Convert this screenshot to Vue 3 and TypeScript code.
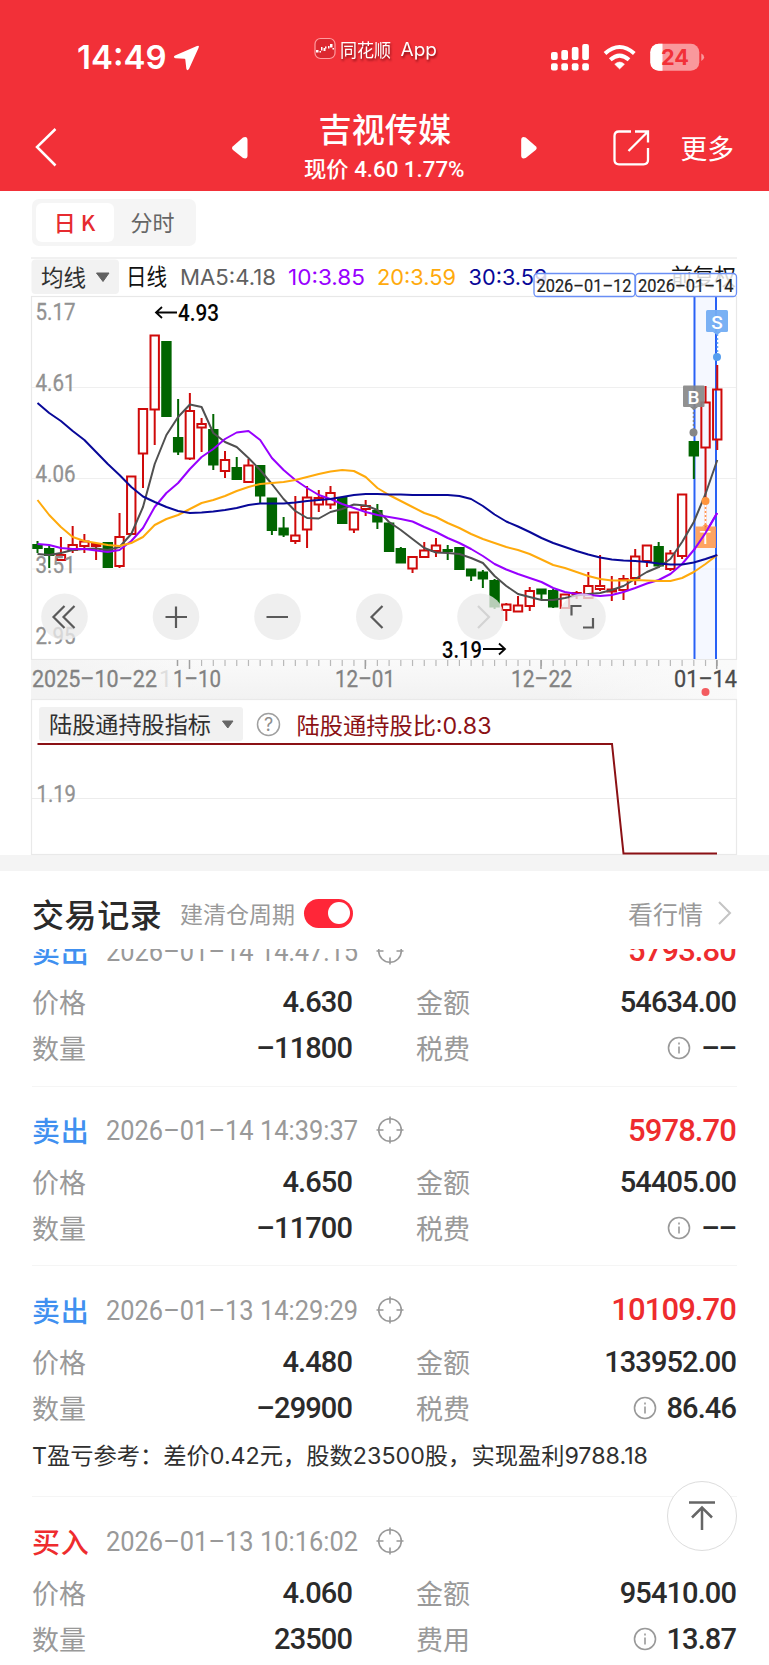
<script setup lang="ts">
type Candle = [top: number, bottom: number, high: number, low: number, rising: boolean]
interface Trade {
  side: string
  buy?: boolean
  time: string
  profit: string
  price: string
  amount: string
  qty: string
  feeLabel: string
  fee: string
  note?: string
}

// Candle bodies and wicks in chart units: top, bottom, high, low
const candles: Candle[] = [
  [545, 548, 541, 553, false],
  [549, 555, 546, 568, false],
  [555, 560, 537, 561, true],
  [545, 550, 526, 553, true],
  [541.5, 546, 534, 553, true],
  [544, 546, 543, 560, true],
  [543, 567, 543, 567, false],
  [537, 566, 513, 568, true],
  [476.5, 534, 476.5, 534, true],
  [409, 453.5, 409, 488, true],
  [335.5, 409.5, 335.5, 445, true],
  [342, 416, 342, 416, false],
  [438, 451.5, 399, 455, false],
  [411, 458.5, 393, 460, true],
  [424, 427.5, 418, 452, true],
  [430, 464.5, 414, 470, false],
  [460, 471, 451, 478, true],
  [468, 479, 457, 479, false],
  [465.5, 482, 459, 483, true],
  [466, 495.5, 466, 503, false],
  [498.5, 530, 498, 535, false],
  [528.5, 534.5, 517, 537, false],
  [535.5, 541, 496, 544, true],
  [497.5, 529.5, 486, 548, true],
  [498, 504.5, 490, 512, true],
  [493, 504.5, 486, 509, true],
  [498, 523, 497, 524, false],
  [512.5, 529.5, 512, 533, true],
  [506, 509, 500, 516, true],
  [511, 521.5, 504, 529, false],
  [523.5, 551, 523, 552, false],
  [549, 562.5, 547, 563, false],
  [557, 568.5, 556, 573, true],
  [550.5, 557, 542, 558, true],
  [545.5, 551, 538, 557, true],
  [550, 551, 545, 560, false],
  [548, 569, 548, 570, false],
  [569.5, 575.5, 569, 581, false],
  [572.5, 578.5, 570, 588, false],
  [581, 606.500, 579, 609, false],
  [604.5, 610, 603, 621, true],
  [605.5, 611.5, 596, 612, true],
  [591, 606, 587, 611, true],
  [589.5, 593.5, 589, 600, false],
  [591, 606.5, 589, 608, false],
  [594.5, 608, 594, 609, true],
  [593, 594, 591, 599, true],
  [586, 598, 572, 599, true],
  [586, 589, 555, 591, true],
  [589.5, 591.5, 576, 601, true],
  [579, 590, 575, 600, true],
  [556.5, 578, 549, 585, true],
  [545.5, 561, 545, 567, true],
  [547, 565.5, 542, 568, false],
  [553.5, 569, 550, 571, true],
  [494.5, 556, 494, 559, true],
  [442, 455.5, 441, 479, false],
  [402.5, 447.5, 386, 540, true],
  [389.5, 439.5, 365, 450, true],
]
const step = 11.72
const cx = (i: number) => 37.5 + i * step

const curve = (values: number[]) =>
  values.map((y, i) => `${cx(i).toFixed(1)},${y}`).join(' ')

const ma5 = curve([554, 555, 553, 550, 549, 548.5, 550, 547, 534, 507, 464, 435, 417, 404.5, 407, 433, 442, 447, 458, 470, 484, 499, 511, 518, 518.5, 512, 509, 504.5, 505.5, 510, 522, 530, 539, 548, 552.5, 553, 554, 558, 563, 576, 586, 594, 597, 600, 600, 598, 595.5, 594, 593, 590, 586, 579, 572, 567, 559, 542, 522, 494, 460])
const ma10 = curve([544, 545, 548, 549, 549, 550.5, 552, 550, 541, 528, 507, 493, 483, 469, 457, 449, 439, 432.5, 431, 440, 458, 470, 480, 488, 495, 499, 504, 508, 512, 515, 517, 519, 521.5, 527, 532, 538, 543, 549, 556, 564, 569.5, 574, 578, 582, 588, 592, 594, 595, 596, 595, 592, 588, 583.5, 580, 574, 564, 550, 533, 513])
const ma20 = curve([500, 515, 527, 537, 541, 543, 545, 546, 543, 537, 525, 519, 515, 509, 503, 500, 496, 491, 487, 484, 483, 482, 480, 477, 474, 471.5, 470, 471, 477, 488, 495, 501, 507, 513, 517, 523, 528, 534, 539, 543, 547, 550, 554, 559.5, 565, 568, 572, 576, 579, 580.5, 580.5, 580, 580.5, 581, 581, 578, 572, 564, 555])
const ma30 = curve([403, 413, 421, 431, 440, 452, 464, 475, 487, 496.5, 502, 507, 511, 513, 512.5, 511.5, 510, 508, 505, 503.5, 503.5, 503.5, 502.5, 501, 500, 499, 497, 495, 494, 494, 494.5, 494.5, 495, 495, 495, 495, 496, 499, 506, 514.5, 521.5, 526.5, 532, 538, 543, 547, 551, 554.5, 557.5, 559.5, 560.5, 561, 562, 563.5, 564.5, 564.5, 562.5, 559, 555])

const axis = [
  { label: '5.17', y: 319.5 },
  { label: '4.61', y: 391 },
  { label: '4.06', y: 482 },
  { label: '3.51', y: 572.5 },
  { label: '2.95', y: 643.5 },
]

const trades: Trade[] = [
  { side: '卖出', time: '2026-01-14 14:47:15', profit: '5793.80', price: '4.630', amount: '54634.00', qty: '-11800', feeLabel: '税费', fee: '--' },
  { side: '卖出', time: '2026-01-14 14:39:37', profit: '5978.70', price: '4.650', amount: '54405.00', qty: '-11700', feeLabel: '税费', fee: '--' },
  { side: '卖出', time: '2026-01-13 14:29:29', profit: '10109.70', price: '4.480', amount: '133952.00', qty: '-29900', feeLabel: '税费', fee: '86.46', note: 'T盈亏参考：差价0.42元，股数23500股，实现盈利9788.18' },
  { side: '买入', buy: true, time: '2026-01-13 10:16:02', profit: '', price: '4.060', amount: '95410.00', qty: '23500', feeLabel: '费用', fee: '13.87' },
]
const dash = (s: string) => s.replace(/-/g, '–')
</script>

<template>
  <main class="screen">
    <header class="header">
      <svg class="header-art" width="769" height="191" viewBox="0 0 769 191">
        <text x="77" y="69.3" class="clock" textLength="89.500" lengthAdjust="spacingAndGlyphs">14:49</text>
        <path d="M175 55.5 197 46Q200 45 198.500 48L189 69Q187 71.500 186.300 68.500L185.300 59.500Q185.200 58.800 184.500 58.700L175.500 58.200Q172.500 57.300 175 55.500Z" fill="#fff" />
        <rect x="315" y="38.500" width="20" height="20" rx="5.500" fill="#dc2830" stroke="#ff9c9f" stroke-width="1.200" />
        <g fill="#fff"><rect x="316" y="50" width="2.500" height="2.500" /><rect x="319.500" y="51" width="1.500" height="1.500" /><rect x="321" y="47" width="1.500" height="3.500" /><rect x="323.500" y="48" width="2" height="3" /><rect x="325" y="46.500" width="1.500" height="2" /><rect x="328" y="46" width="1.500" height="2.500" /><rect x="330" y="44" width="2.500" height="3.500" /><rect x="332.500" y="48" width="1.500" height="1.500" /></g>
        <text x="340" y="56.500" class="appname" textLength="51" lengthAdjust="spacingAndGlyphs">同花顺</text>
        <text x="400.500" y="56" class="appname" textLength="36.500" lengthAdjust="spacingAndGlyphs">App</text>
        <g fill="#fff">
          <rect x="551" y="52" width="6.700" height="8" rx="2" /><rect x="561.300" y="50" width="6.700" height="10" rx="2" />
          <rect x="571.800" y="47" width="6.700" height="13" rx="2" /><rect x="582.200" y="44" width="6.700" height="16" rx="2" />
          <rect v-for="x in [551, 561.3, 571.8, 582.2]" :key="x" :x="x" y="63.300" width="6.700" height="7.200" rx="2" />
          <path d="M619.600 69 614.700 64.200Q619.600 59.800 624.500 64.200Z" stroke="#fff" stroke-width=".5" />
        </g>
        <g fill="none" stroke="#fff" stroke-width="4"><path d="M605 53.500Q619.600 40.500 634.300 53.500" /><path d="M610.300 59.800Q619.600 51.500 629 59.800" /></g>
        <rect x="650.300" y="43.800" width="49" height="27" rx="8.500" fill="#f9989c" />
        <path d="M662.500 43.800h-3.700a8.500 8.500 0 0 0-8.500 8.500v10a8.500 8.500 0 0 0 8.500 8.500h3.700z" fill="#fff" />
        <path d="M701.300 53.500q2.800 1.300 2.800 3.800t-2.800 3.800z" fill="#f9989c" />
        <text x="661" y="65" class="battery" textLength="28" lengthAdjust="spacingAndGlyphs">24</text>
        <path d="M55.500 129 37 147 55.500 165.500" fill="none" stroke="#fff" stroke-width="2.500" />
        <path d="M233 146.200 243 137.500Q247.500 136 247.500 140V155.500Q247.500 159.500 243 158L233 150Q231 148 233 146.200Z" fill="#fff" />
        <path d="M535.700 146.200 525.700 137.500Q521.200 136 521.200 140V155.500Q521.200 159.500 525.700 158L535.700 150Q537.700 148 535.700 146.200Z" fill="#fff" />
        <text x="318.500" y="142" class="title" textLength="132.500" lengthAdjust="spacingAndGlyphs">吉视传媒</text>
        <text x="304" y="177" class="quote" textLength="160.500" lengthAdjust="spacingAndGlyphs">现价 4.60 1.77%</text>
        <g fill="none" stroke="#fff" stroke-width="2.300"><path d="M631 131.500H619Q614.500 131.500 614.500 136V160Q614.500 164.300 619 164.300H643.500Q648 164.300 648 160V148" /><path d="M635 131.500H648V142.500M648 131.500 628.500 151" /></g>
        <text x="680.500" y="158.500" class="more" textLength="53.500" lengthAdjust="spacingAndGlyphs">更多</text>
      </svg>
    </header>

    <nav class="tabs">
      <span class="tab active">日 K</span>
      <span class="tab">分时</span>
    </nav>

    <svg class="chart" width="769" height="613" viewBox="0 245 769 613">
      <defs>
        <linearGradient id="axisFade" x1="0" x2="0" y1="0" y2="1"><stop offset="0" stop-color="#fafafa" /><stop offset="1" stop-color="#f2f2f2" /></linearGradient>
        <linearGradient id="axisSide" x1="0" x2="1"><stop offset="0" stop-color="#f3f3f3" /><stop offset=".25" stop-color="#f3f3f3" stop-opacity="0" /><stop offset=".75" stop-color="#fafafa" stop-opacity="0" /><stop offset="1" stop-color="#fafafa" /></linearGradient>
      </defs>
      <path d="M31 258H737" stroke="#f1f1f1" stroke-width="2" />
      <rect x="31.500" y="259.500" width="87.500" height="34.500" rx="4" fill="#f2f2f2" />
      <text x="41" y="285.500" class="cn" textLength="45" lengthAdjust="spacingAndGlyphs">均线</text>
      <path d="M96.500 273H109L103 281.500Z" fill="#606060" stroke="#606060" stroke-linejoin="round" />
      <text x="126" y="284.500" class="cn dark" textLength="41" lengthAdjust="spacingAndGlyphs">日线</text>
      <g class="ma">
        <text x="180" y="284.500" fill="#606060" textLength="96" lengthAdjust="spacingAndGlyphs">MA5:4.18</text>
        <text x="288" y="284.500" fill="#9800ff" textLength="77" lengthAdjust="spacingAndGlyphs">10:3.85</text>
        <text x="377" y="284.500" fill="#ffaa0c" textLength="79" lengthAdjust="spacingAndGlyphs">20:3.59</text>
        <text x="468.500" y="284.500" fill="#080898" textLength="79" lengthAdjust="spacingAndGlyphs">30:3.59</text>
      </g>
      <text x="671" y="285" class="cn dark" textLength="65" lengthAdjust="spacingAndGlyphs">前复权</text>

      <rect x="31.500" y="296.500" width="705" height="363" fill="none" stroke="#e8e8e8" stroke-width="1.200" />
      <path d="M32 387.500H736M32 478.500H736M32 569H736" stroke="#efefef" stroke-width="1.200" />
      <rect x="696" y="297" width="20" height="362" fill="#f5f8ff" />
      <path d="M696 387.500H716M696 478.500H716M696 569H716" stroke="#e9edf4" stroke-width="1.200" />
      <path d="M694.500 297V659M716 297V659" stroke="#2861f6" stroke-width="2" />

      <g v-for="([top, bottom, high, low, rising], i) in candles" :key="i" :stroke="rising ? '#cf0a0a' : '#006500'" :fill="rising ? 'none' : '#006500'" stroke-width="2">
        <path :d="`M${cx(i)} ${high}V${top}M${cx(i)} ${bottom}V${low}`" />
        <rect :x="cx(i) - 4.2" :y="top" width="8.400" :height="bottom - top" />
      </g>
      <g fill="none" stroke-width="2" stroke-linejoin="round">
        <polyline :points="ma5" stroke="#505050" /><polyline :points="ma10" stroke="#9800ff" />
        <polyline :points="ma20" stroke="#ffaa0c" /><polyline :points="ma30" stroke="#080898" />
      </g>

      <g class="axis">
        <text v-for="a in axis" :key="a.label" x="35.500" :y="a.y" textLength="40" lengthAdjust="spacingAndGlyphs">{{ a.label }}</text>
      </g>
      <g fill="none" stroke="#050505" stroke-width="1.800">
        <path d="M177 312.500H156M162 307 156 312.500 162 318" /><path d="M483 649H505M499 643.500 505 649 499 654.500" />
      </g>
      <text x="178" y="321" class="extreme" textLength="41" lengthAdjust="spacingAndGlyphs">4.93</text>
      <text x="442" y="657.500" class="extreme" textLength="40" lengthAdjust="spacingAndGlyphs">3.19</text>

      <g fill="#eaeaea" fill-opacity=".78">
        <circle v-for="x in [64.5, 176, 277.5, 379.3, 480.5, 582.5]" :key="x" :cx="x" cy="616.700" r="23.300" />
      </g>
      <g fill="none" stroke="#5a5a5a" stroke-width="2.200">
        <path d="M64.500 606 53.500 617 64.500 628M74.500 606 63.500 617 74.500 628" />
        <path d="M165.500 617H187M176 606.500V628M266.500 617H288M382.500 606 371.500 617 382.500 628" />
        <path d="M571.500 615.500V606H581.500M593 618V627.500H583" />
        <path d="M478 606 489 617 478 628" stroke="#d3d3d3" />
      </g>

      <rect x="31" y="660" width="706" height="39" fill="url(#axisFade)" /><rect x="31" y="660" width="706" height="39" fill="url(#axisSide)" />
      <path v-for="i in 45" :key="i" :d="`M${cx(i + 13)} 660v6`" stroke="#b9b9b9" stroke-width="1.200" />
      <path d="M177.500 660V666M189.500 660V669M365.300 660V669M541 660V669M716.700 660V669" stroke="#a0a0a0" stroke-width="1.500" />
      <g class="date">
        <text x="32" y="686.500" textLength="125" lengthAdjust="spacingAndGlyphs">2025–10–22</text>
        <text x="159" y="686.500" class="faded">1</text><text x="173" y="686.500" textLength="48" lengthAdjust="spacingAndGlyphs">1–10</text>
        <text x="335" y="686.500" textLength="60" lengthAdjust="spacingAndGlyphs">12–01</text>
        <text x="511" y="686.500" textLength="61" lengthAdjust="spacingAndGlyphs">12–22</text>
        <text x="674" y="686.500" class="today" textLength="63" lengthAdjust="spacingAndGlyphs">01–14</text>
      </g>
      <circle cx="705.500" cy="692" r="4" fill="#f35c60" />

      <g>
        <path d="M693.500 408V431" stroke="#858585" stroke-width="1.500" stroke-dasharray="2 2" />
        <path d="M717.500 334V354" stroke="#64aaf4" stroke-width="1.500" stroke-dasharray="2 2" />
        <path d="M705.500 503V526" stroke="#fff" stroke-width="2.500" /><path d="M705.500 503V526" stroke="#ff994d" stroke-width="1.500" stroke-dasharray="2 2" />
        <circle cx="693.500" cy="432.500" r="4" fill="#858585" /><circle cx="717" cy="357" r="4" fill="#559eee" /><circle cx="705.500" cy="501" r="4" fill="#ff953d" />
        <rect x="683" y="385.500" width="21.500" height="21.500" rx="1" fill="#858585" fill-opacity=".9" /><path d="M690 407l4 3 4-3z" fill="#858585" />
        <rect x="706" y="310" width="22" height="22" rx="1.500" fill="#73adf3" fill-opacity=".95" /><path d="M713 332l4 3 4-3z" fill="#73adf3" />
        <rect x="695.500" y="526.500" width="20.500" height="21.500" fill="#ff9a50" fill-opacity=".9" /><path d="M702 526.500l3.500-3 3.500 3z" fill="#ff994d" />
        <g class="badge"><text x="693.500" y="403.500">B</text><text x="717" y="328.500">S</text><text x="705.500" y="544" class="light">T</text></g>
        <path d="M694 550 705.500 533 717 513" fill="none" stroke="#9800ff" stroke-width="2" />
      </g>
      <g fill="#fff" fill-opacity=".82" stroke="#698ef5" stroke-width="1.300"><rect x="534" y="273.500" width="101" height="23" rx="3.500" /><rect x="635.500" y="273.500" width="101" height="23" rx="3.500" /></g>
      <g class="range"><text x="536.500" y="291.500" textLength="95" lengthAdjust="spacingAndGlyphs">2026–01–12</text><text x="638" y="291.500" textLength="95.500" lengthAdjust="spacingAndGlyphs">2026–01–14</text></g>

      <rect x="31.500" y="699.500" width="705" height="155" fill="#fff" stroke="#e9e9e9" stroke-width="1.200" />
      <path d="M32 798.500H736" stroke="#ececec" />
      <rect x="39" y="707" width="204" height="34" rx="3" fill="#f1f1f1" />
      <text x="49" y="733" class="cn" textLength="162" lengthAdjust="spacingAndGlyphs">陆股通持股指标</text>
      <path d="M222.500 721H233L227.800 728Z" fill="#666" stroke="#666" stroke-linejoin="round" />
      <circle cx="268.500" cy="724.500" r="11" fill="none" stroke="#a0a0a0" stroke-width="1.500" /><text x="268.500" y="731" class="help">?</text>
      <text x="296.500" y="733.500" class="cn holding" textLength="195" lengthAdjust="spacingAndGlyphs">陆股通持股比:0.83</text>
      <path d="M37.500 744H612L623.500 853.500H717" fill="none" stroke="#8b1115" stroke-width="2" />
      <text x="36.500" y="802" class="holding-axis" textLength="39.500" lengthAdjust="spacingAndGlyphs">1.19</text>
    </svg>

    <section class="records">
      <div class="record-head">
        <h2>交易记录</h2><span class="cycle">建清仓周期</span><i class="switch"></i>
        <a class="market">看行情<svg width="15" height="26" viewBox="0 0 15 26"><path d="M2 2 13 13 2 24" fill="none" stroke="#c4c4c4" stroke-width="2" /></svg></a>
      </div>
      <div class="viewport">
        <article v-for="(t, i) in trades" :key="i" class="trade" :class="{ first: i === 0, noted: t.note }">
          <div class="heading">
            <b class="side" :class="{ buy: t.buy }">{{ t.side }}</b>
            <svg class="time" width="252" height="34"><text x="0" y="27" textLength="252" lengthAdjust="spacingAndGlyphs">{{ dash(t.time) }}</text></svg>
            <svg class="target" width="28" height="28" viewBox="0 0 28 28"><circle cx="14" cy="14" r="11.300" /><path d="M14 .5V7.500M14 20.500V27.500M.5 14H7.500M20.500 14H27.500" /></svg>
            <strong class="profit">{{ t.profit }}</strong>
          </div>
          <div class="row"><span>价格</span><b>{{ t.price }}</b><span class="second">金额</span><b class="end">{{ t.amount }}</b></div>
          <div class="row"><span>数量</span><b>{{ dash(t.qty) }}</b><span class="second">{{ t.feeLabel }}</span>
            <b class="end"><svg class="info" width="24" height="24" viewBox="0 0 24 24"><circle cx="12" cy="12" r="10.500" /><path d="M12 10.500V17.500M12 6.500V8.500" /></svg><span class="fee" :class="{ empty: t.fee === '--' }">{{ dash(t.fee) }}</span></b>
          </div>
          <svg v-if="t.note" class="note" width="706" height="36"><text x="0" y="26" textLength="616" lengthAdjust="spacingAndGlyphs">{{ t.note }}</text></svg>
        </article>
      </div>
    </section>
    <button class="to-top" aria-label="top"><svg width="30" height="32" viewBox="0 0 30 32"><path d="M2 2.500H28M15 30V8M5 17.500 15 7.500 25 17.500" fill="none" stroke="#666" stroke-width="2.500" /></svg></button>
  </main>
</template>

<style>
body { background: #fff; }
</style>
<style scoped>
* { box-sizing: border-box; }
.screen { width: 769px; height: 1665px; overflow: hidden; background: #fff; font-family: Roboto, "Noto Sans CJK SC", sans-serif; position: relative; }
.header { height: 191px; background: #f23038; }
svg { display: block; }
.header-art text { fill: #fff; }
.clock { font: 600 33px Inter, sans-serif; }
.header-art .appname { font: 400 18px Inter, "Noto Sans CJK SC", sans-serif; filter: drop-shadow(1px 2px 1px #8c1118); }
.header-art .battery { font: 700 21px Inter, sans-serif; fill: #f23038; }
.title { font: 500 33px "Noto Sans CJK SC", sans-serif; }
.quote { font: 500 22px Roboto, "Noto Sans CJK SC", sans-serif; }
.more { font: 400 27px "Noto Sans CJK SC", sans-serif; }
.tabs { display: flex; width: 164px; height: 47px; margin: 8px 0 0 31.500px; padding: 4px; border-radius: 7px; background: #f5f5f5; }
.tab { flex: 1; display: flex; align-items: center; justify-content: center; border-radius: 6px; padding-bottom: 4px; font: 400 22px "Noto Sans CJK SC", sans-serif; color: #666; }
.tab.active { background: #fff; color: #e62b30; font-weight: 500; }
.chart { margin-top: -1px; }
.cn { font: 400 23px Inter, "Noto Sans CJK SC", sans-serif; fill: #303030; }
.dark { fill: #111; }
.ma { font: 400 21.500px Inter, sans-serif; }
.axis, .holding-axis { font: 400 24px Roboto, sans-serif; fill: #929292; stroke: #929292; stroke-width: .3px; }
.extreme { font: 500 24px Roboto, sans-serif; fill: #050505; }
.date { font: 400 23.500px Roboto, sans-serif; fill: #828282; stroke: #828282; stroke-width: .3px; }
.faded { fill: #dedede; stroke: none; }
.today { fill: #4b4b4b; stroke: #4b4b4b; }
.range { font: 400 18.500px Roboto, sans-serif; fill: #222; stroke: #222; stroke-width: .2px; }
.badge { font: 500 19px Roboto, sans-serif; fill: #fff; text-anchor: middle; }
.light { font-weight: 400; }
.help { font: 400 18px Inter, sans-serif; fill: #8e8e8e; text-anchor: middle; }
.holding { fill: #8b1115; }
.records { border-top: 16px solid #f4f4f4; margin-top: -3px; }
.record-head { height: 78px; padding: 6px 32px 0; display: flex; align-items: center; }
h2 { margin: 0; width: 148px; font: 500 32px/44px "Noto Sans CJK SC", sans-serif; letter-spacing: .6px; color: #2a2a2a; }
.cycle { width: 124px; font: 400 23px "Noto Sans CJK SC", sans-serif; color: #999; }
.switch { width: 49px; height: 29px; border-radius: 15px; background: #ff2638; padding: 3.500px; display: flex; justify-content: flex-end; }
.switch::after { content: ""; width: 22px; height: 22px; border-radius: 50%; background: #fff; }
.market { margin-left: auto; display: flex; align-items: center; gap: 14px; font: 400 25px "Noto Sans CJK SC", sans-serif; color: #999; padding-right: 5px; }
.viewport { height: 716px; overflow: hidden; }
.trade { margin: 0 32px; border-bottom: 1.500px solid #f5f5f5; height: 179.700px; padding-top: 21.500px; }
.trade.first { margin-top: -42px; }
.trade.noted { height: 231px; }
.heading { height: 44px; display: flex; align-items: center; }
.side { width: 74px; font: 500 28px "Noto Sans CJK SC", sans-serif; letter-spacing: .7px; color: #4090f0; }
.side.buy { color: #ee2c2e; }
.time text { font: 400 27.500px Roboto, sans-serif; fill: #999; }
.target { margin-left: 18px; }
.target, .info { fill: none; stroke: #999; stroke-width: 1.600; }
.profit { margin-left: auto; margin-right: 1px; color: #ee2c2e; font: 500 31px Roboto, sans-serif; letter-spacing: -.9px; }
.row { display: grid; grid-template-columns: 120px 200px 132px 1fr; align-items: center; height: 46.300px; font: 400 27px "Noto Sans CJK SC", sans-serif; color: #999; }
.row > span { padding-bottom: 1px; }
.heading + .row { margin-top: 6.500px; }
.row b { font: 500 29px Roboto, sans-serif; letter-spacing: -.9px; color: #2b2b2b; text-align: right; }
.second { padding-left: 64px; }
.row .end { display: flex; align-items: center; justify-content: flex-end; gap: 10px; padding-right: 1px; }
.fee.empty { letter-spacing: -1.200px; }
.note text { font: 400 23px Inter, "Noto Sans CJK SC", sans-serif; fill: #303030; }
.note { margin-top: 7.500px; }
.to-top { position: absolute; left: 667px; top: 1481px; width: 70px; height: 70px; border: 1.500px solid #ddd; border-radius: 50%; background: #fff; display: grid; place-items: center; padding: 0; }
</style>
